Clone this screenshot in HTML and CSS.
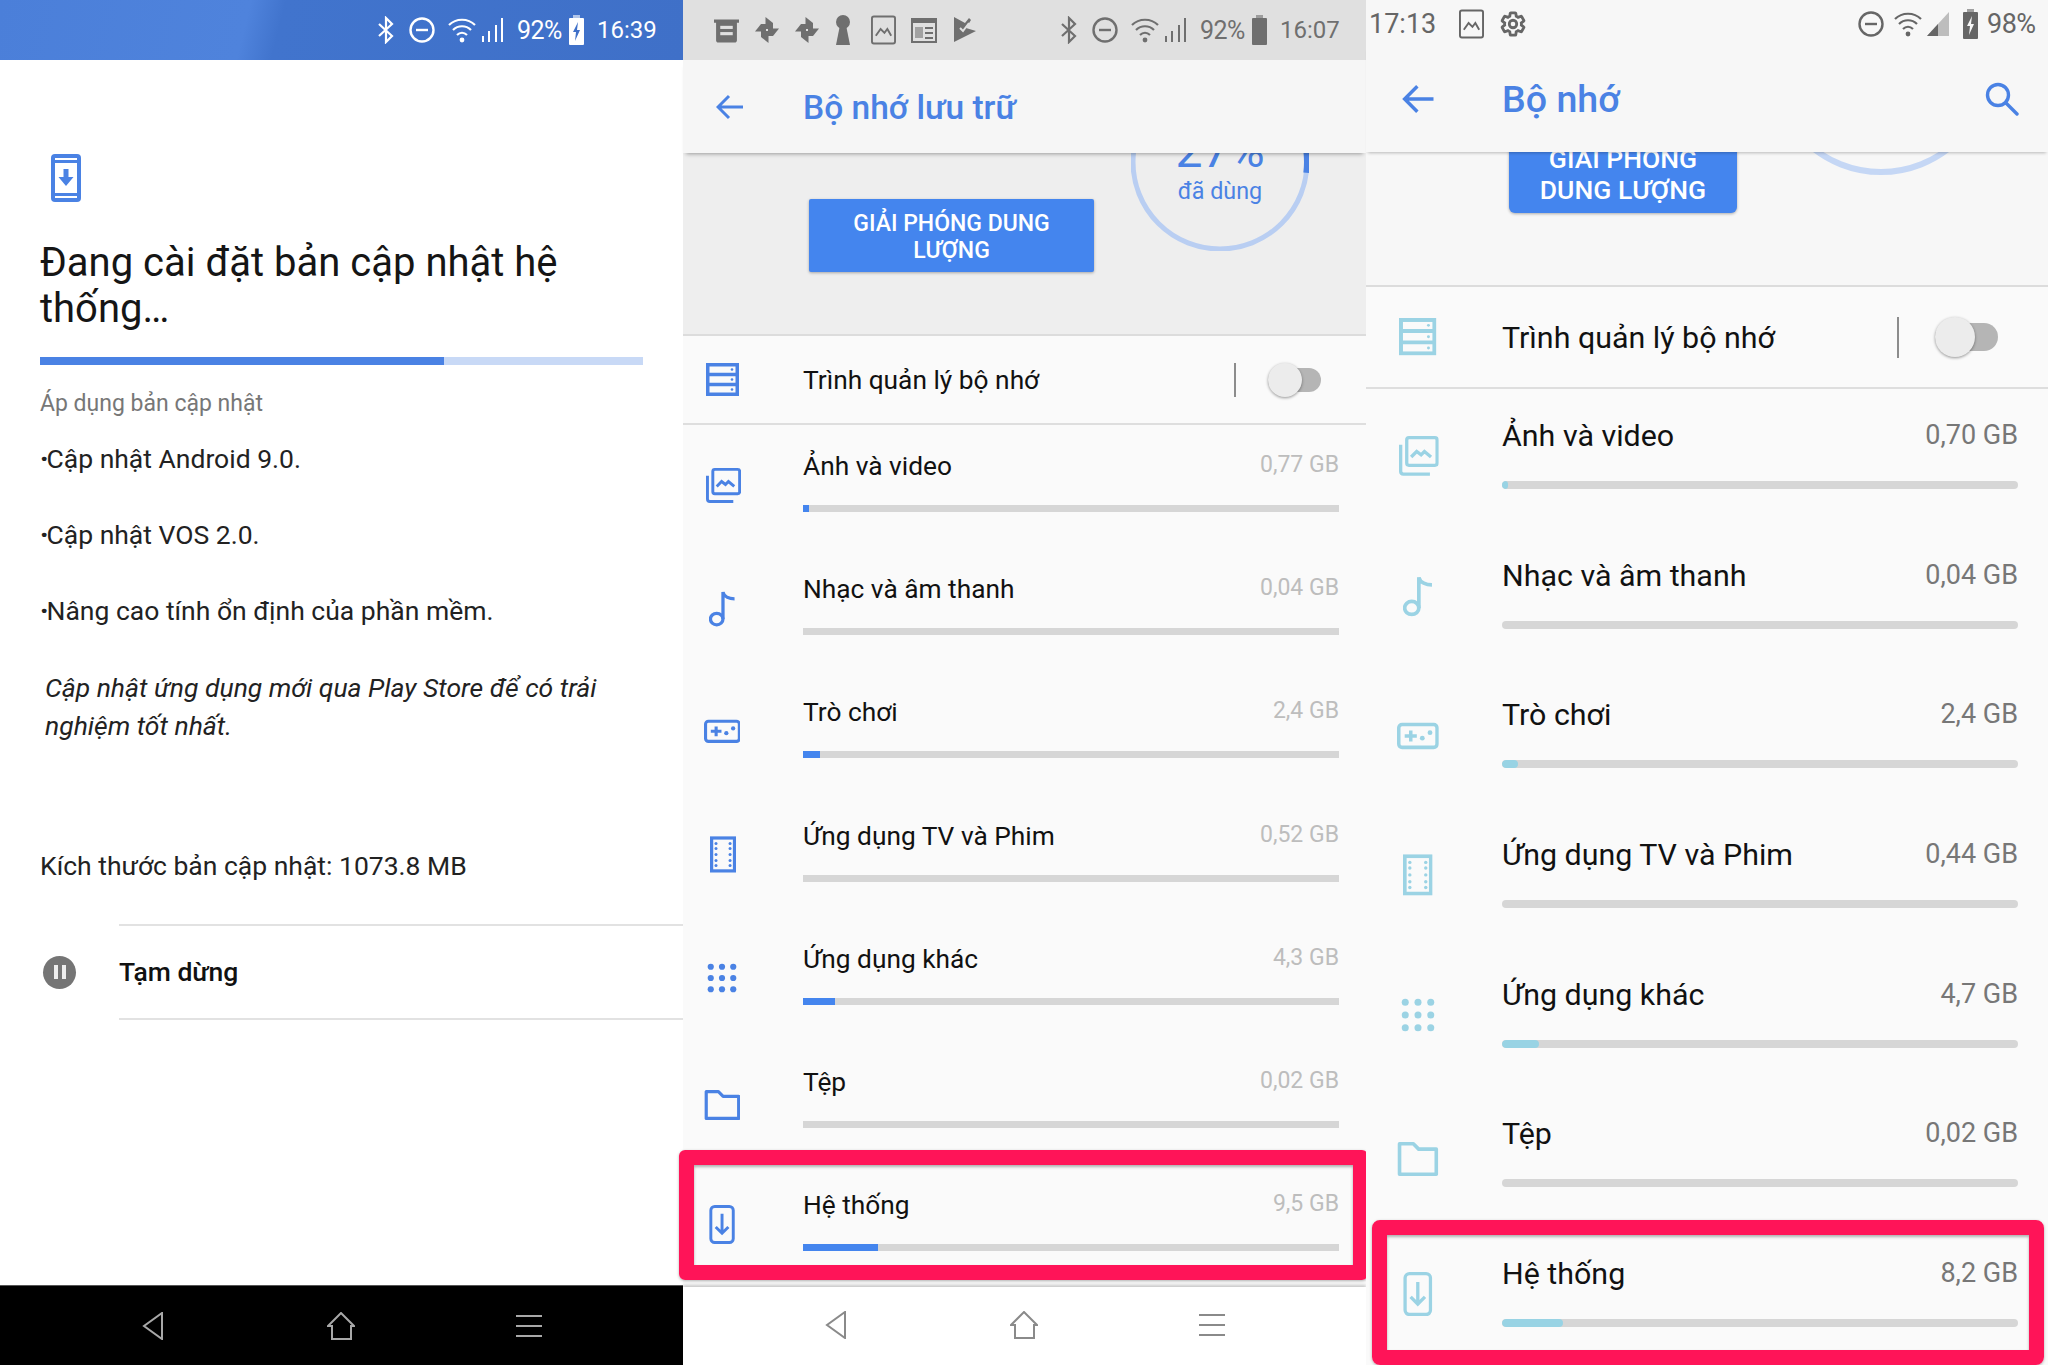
FILE: index.html
```html
<!DOCTYPE html>
<html lang="vi">
<head>
    <meta charset="UTF-8">
    <title>Bộ nhớ</title>
    <link rel="stylesheet" href="styles.css">
</head>
<body>
    <!-- icon set -->
    <svg class="defs" xmlns="http://www.w3.org/2000/svg">
        <symbol id="i-bt" viewBox="0 0 18 28"><path d="M2 8l13 12-6 6V2l6 6L2 20" fill="none" stroke="currentColor" stroke-width="2.2"/></symbol>
        <symbol id="i-dnd" viewBox="0 0 26 26"><circle cx="13" cy="13" r="11.5" fill="none" stroke="currentColor" stroke-width="2.4"/><rect x="7" y="11.8" width="12" height="2.4" fill="currentColor"/></symbol>
        <symbol id="i-wifi" viewBox="0 0 28 26"><g fill="none" stroke="currentColor" stroke-width="2.2"><path d="M1 8c7-7 19-7 26 0"/><path d="M5 13c5-5 13-5 18 0"/><path d="M9 18c3-3 7-3 10 0"/></g><circle cx="14" cy="23" r="2.4" fill="currentColor"/></symbol>
        <symbol id="i-bars" viewBox="0 0 22 26"><g fill="currentColor"><rect x="0" y="19" width="2" height="6"/><rect x="6" y="14" width="2" height="11"/><rect x="13" y="8" width="2" height="17"/><rect x="19" y="1" width="2" height="24"/></g></symbol>
        <symbol id="i-signal" viewBox="0 0 22 24"><path d="M22 0v24H0z" fill="#bdbdbd"/><path d="M11 12v12H0z" fill="currentColor"/></symbol>
        <symbol id="i-bat" viewBox="0 0 15 30"><rect x="4" y="0" width="7" height="3" fill="currentColor" opacity=".6"/><rect x="0" y="3" width="15" height="27" rx="1" fill="currentColor"/></symbol>
        <symbol id="i-batc" viewBox="0 0 15 30"><rect x="4" y="0" width="7" height="3" fill="currentColor" opacity=".6"/><rect x="0" y="3" width="15" height="27" rx="1" fill="currentColor"/><path d="M9 7l-5 10h3l-1 9 5-11H8z" fill="var(--bolt)"/></symbol>
        <symbol id="i-news" viewBox="0 0 24 24"><path d="M0 2h24v3h-2v17c0 1-1 2-2 2H4c-1 0-2-1-2-2V5H0z" fill="currentColor"/><rect x="6" y="8" width="12" height="3" fill="#e0e0e0"/><rect x="6" y="14" width="12" height="3" fill="#e0e0e0"/></symbol>
        <symbol id="i-pin" viewBox="0 0 24 28"><g fill="currentColor"><path d="M10.500 13V1l7.500 6v6z"/><path d="M13 12.500h11l-6 7.500h-5z"/><path d="M13.500 15v12l-7.500-6v-6z"/><path d="M11 15.500H0l6-7.500h5z"/></g></symbol>
        <symbol id="i-key" viewBox="0 0 16 30"><circle cx="8" cy="7" r="7" fill="currentColor"/><path d="M5 10h6l4 20H1z" fill="currentColor"/></symbol>
        <symbol id="i-image" viewBox="0 0 26 30"><rect x="1" y="1" width="24" height="28" rx="2" fill="none" stroke="currentColor" stroke-width="2"/><path d="M5 21l5-7 4 4 3-4 4 7" fill="none" stroke="currentColor" stroke-width="2"/></symbol>
        <symbol id="i-paper" viewBox="0 0 26 26"><rect x="1" y="2" width="24" height="23" fill="none" stroke="currentColor" stroke-width="2"/><rect x="1" y="1" width="24" height="5" fill="currentColor"/><rect x="4" y="10" width="8" height="11" fill="currentColor" opacity=".55"/><rect x="14" y="10" width="8" height="2" fill="currentColor"/><rect x="14" y="15" width="8" height="2" fill="currentColor"/><rect x="14" y="20" width="8" height="2" fill="currentColor"/></symbol>
        <symbol id="i-flag" viewBox="0 0 22 28"><path d="M0 1l11 6 4-5 2 2-5 8 10 3-22 11z" fill="currentColor"/><path d="M6 12l3 3 6-8" fill="none" stroke="#e0e0e0" stroke-width="2"/></symbol>
        <symbol id="i-gear" viewBox="0 0 24 24"><path d="M19.14 12.94c.04-.3.06-.61.06-.94 0-.32-.02-.64-.07-.94l2.03-1.58c.18-.14.23-.41.12-.61l-1.92-3.32c-.12-.22-.37-.29-.59-.22l-2.39.96c-.5-.38-1.03-.7-1.62-.94l-.36-2.54c-.04-.24-.24-.41-.48-.41h-3.84c-.24 0-.43.17-.47.41l-.36 2.54c-.59.24-1.13.57-1.62.94l-2.39-.96c-.22-.08-.47 0-.59.22L2.74 8.87c-.12.21-.08.47.12.61l2.03 1.58c-.05.3-.09.63-.09.94s.02.64.07.94l-2.03 1.58c-.18.14-.23.41-.12.61l1.92 3.32c.12.22.37.29.59.22l2.39-.96c.5.38 1.03.7 1.62.94l.36 2.54c.05.24.24.41.48.41h3.84c.24 0 .44-.17.47-.41l.36-2.54c.59-.24 1.13-.56 1.62-.94l2.39.96c.22.08.47 0 .59-.22l1.92-3.32c.12-.22.07-.47-.12-.61l-2.01-1.58z" fill="none" stroke="currentColor" stroke-width="2.4"/><circle cx="12" cy="12" r="3.2" fill="none" stroke="currentColor" stroke-width="2.400"/></symbol>

        <symbol id="i-update" viewBox="0 0 30 48"><rect width="30" height="48" rx="4" fill="currentColor"/><g fill="#fff"><rect x="4" y="4" width="22" height="2"/><rect x="4" y="9" width="22" height="30"/><rect x="4" y="42" width="22" height="2"/></g><path d="M12.500 15h5v8h5L15 32l-7.500-9h5z" fill="currentColor"/></symbol>
        <symbol id="i-storage" viewBox="0 0 33 33"><g fill="none" stroke="currentColor" stroke-width="3.500"><rect x="1.750" y="1.750" width="29.500" height="29.500"/><path d="M1.500 11.500h30M1.500 21.500h30"/></g><g fill="currentColor"><circle cx="26" cy="6.500" r="1.300"/><circle cx="26" cy="16.500" r="1.300"/><circle cx="26" cy="26.500" r="1.300"/></g></symbol>
        <symbol id="i-photo" viewBox="0 0 36 36"><g fill="none" stroke="currentColor" stroke-width="3"><rect x="7" y="1.500" width="27.500" height="25" rx="2"/><path d="M1.500 8v24c0 1.500 1 2.500 2.500 2.500h24"/><path d="M11 19l5-5 4 3 3-3 6 5"/></g></symbol>
        <symbol id="i-note" viewBox="0 0 28 38"><g fill="none" stroke="currentColor" stroke-width="3.400"><ellipse cx="8" cy="30" rx="6.500" ry="6"/><path d="M14.500 30V2c1 5 7 7 12 7"/></g></symbol>
        <symbol id="i-game" viewBox="0 0 38 24"><g fill="none" stroke="currentColor" stroke-width="3.200"><rect x="1.600" y="1.600" width="34.800" height="20.800" rx="3"/><path d="M7 12h11M12.500 7v10"/></g><g fill="currentColor"><circle cx="23" cy="14" r="2.200"/><circle cx="30" cy="9" r="2.200"/></g></symbol>
        <symbol id="i-film" viewBox="0 0 26 36"><rect x="1.600" y="1.600" width="22.800" height="32.800" fill="none" stroke="currentColor" stroke-width="3.200"/><g fill="currentColor"><circle cx="6" cy="7" r="1.500"/><circle cx="6" cy="12" r="1.500"/><circle cx="6" cy="18" r="1.500"/><circle cx="6" cy="24" r="1.500"/><circle cx="6" cy="29" r="1.500"/><circle cx="20" cy="7" r="1.500"/><circle cx="20" cy="12" r="1.500"/><circle cx="20" cy="18" r="1.500"/><circle cx="20" cy="24" r="1.500"/><circle cx="20" cy="29" r="1.500"/></g></symbol>
        <symbol id="i-apps" viewBox="0 0 32 32"><g fill="currentColor"><circle cx="4" cy="4" r="3.300"/><circle cx="16" cy="4" r="3.300"/><circle cx="28" cy="4" r="3.300"/><circle cx="4" cy="16" r="3.300"/><circle cx="16" cy="16" r="3.300"/><circle cx="28" cy="16" r="3.300"/><circle cx="4" cy="28" r="3.300"/><circle cx="16" cy="28" r="3.300"/><circle cx="28" cy="28" r="3.300"/></g></symbol>
        <symbol id="i-folder" viewBox="0 0 38 32"><path d="M1.700 1.700h13l5 5h16.600v23.600h-34.600z" fill="none" stroke="currentColor" stroke-width="3.400" stroke-linejoin="round"/></symbol>
        <symbol id="i-system" viewBox="0 0 26 40"><rect x="1.500" y="1.500" width="23" height="37" rx="4" fill="none" stroke="currentColor" stroke-width="3"/><path d="M13 9v20M6.500 22.500L13 29l6.500-6.500" fill="none" stroke="currentColor" stroke-width="3"/></symbol>
        <symbol id="i-back" viewBox="0 0 28 26"><path d="M27 13H3M13 2L2 13l11 11" fill="none" stroke="currentColor" stroke-width="3"/></symbol>
        <symbol id="i-search" viewBox="0 0 34 34"><circle cx="13" cy="13" r="10.500" fill="none" stroke="currentColor" stroke-width="3.400"/><path d="M21 21l11 11" stroke="currentColor" stroke-width="3.400" stroke-linecap="round"/></symbol>

        <symbol id="i-nav-back" viewBox="0 0 28 28"><path d="M23 1v26L5 14z" fill="none" stroke="currentColor" stroke-width="2"/></symbol>
        <symbol id="i-nav-home" viewBox="0 0 28 28"><path d="M1 14L14 1l13 13h-3v13H5V14z" fill="none" stroke="currentColor" stroke-width="2"/></symbol>
        <symbol id="i-nav-menu" viewBox="0 0 28 28"><path d="M1 4h26M1 14h26M1 24h26" fill="none" stroke="currentColor" stroke-width="2.200"/></symbol>
    </svg>

    <div class="screens">
        <!-- man hinh 1 -->
        <section class="panel update">
            <div class="statusbar statusbar-blue">
                <svg class="st st-bt"><use href="#i-bt"/></svg>
                <svg class="st st-dnd"><use href="#i-dnd"/></svg>
                <svg class="st st-wifi"><use href="#i-wifi"/></svg>
                <svg class="st st-bars"><use href="#i-bars"/></svg>
                <span class="st-text st-pct">92%</span>
                <svg class="st st-bat"><use href="#i-batc"/></svg>
                <span class="st-text st-time">16:39</span>
            </div>
            <div class="update-body">
                <svg class="update-icon"><use href="#i-update"/></svg>
                <h1 class="update-title">Đang cài đặt bản cập nhật hệ thống…</h1>
                <div class="update-progress"><div class="update-progress-fill"></div></div>
                <p class="update-sub">Áp dụng bản cập nhật</p>
                <p class="update-line"><b class="dot">·</b>Cập nhật Android 9.0.</p>
                <p class="update-line"><b class="dot">·</b>Cập nhật VOS 2.0.</p>
                <p class="update-line"><b class="dot">·</b>Nâng cao tính ổn định của phần mềm.</p>
                <p class="update-note">Cập nhật ứng dụng mới qua Play Store để có trải nghiệm tốt nhất.</p>
                <p class="update-size">Kích thước bản cập nhật: 1073.8 MB</p>
            </div>
            <div class="pause-row">
                <div class="pause-icon"><i></i><i></i></div>
                <div class="pause-label">Tạm dừng</div>
            </div>
            <div class="navbar navbar-dark">
                <svg><use href="#i-nav-back"/></svg>
                <svg><use href="#i-nav-home"/></svg>
                <svg><use href="#i-nav-menu"/></svg>
            </div>
        </section>

        <!-- man hinh 2 -->
        <section class="panel storage storage-a">
            <div class="statusbar statusbar-grey">
                <div class="notif">
                    <svg class="nt nt-news"><use href="#i-news"/></svg>
                    <svg class="nt nt-pin"><use href="#i-pin"/></svg>
                    <svg class="nt nt-pin"><use href="#i-pin"/></svg>
                    <svg class="nt nt-key"><use href="#i-key"/></svg>
                    <svg class="nt nt-image"><use href="#i-image"/></svg>
                    <svg class="nt nt-paper"><use href="#i-paper"/></svg>
                    <svg class="nt nt-flag"><use href="#i-flag"/></svg>
                </div>
                <svg class="st st-bt"><use href="#i-bt"/></svg>
                <svg class="st st-dnd"><use href="#i-dnd"/></svg>
                <svg class="st st-wifi"><use href="#i-wifi"/></svg>
                <svg class="st st-bars"><use href="#i-bars"/></svg>
                <span class="st-text st-pct">92%</span>
                <svg class="st st-bat"><use href="#i-bat"/></svg>
                <span class="st-text st-time">16:07</span>
            </div>
            <header class="appbar">
                <svg class="appbar-back"><use href="#i-back"/></svg>
                <div class="appbar-title">Bộ nhớ lưu trữ</div>
            </header>
            <div class="summary">
                <button class="free-btn">GIẢI PHÓNG DUNG LƯỢNG</button>
                <div class="gauge">
                    <svg viewBox="0 0 178 178"><circle class="gauge-track" cx="89" cy="89" r="87"/><circle class="gauge-arc" cx="89" cy="89" r="87" pathLength="100"/></svg>
                    <div class="gauge-text"><div class="gauge-num">27%</div><div class="gauge-cap">đã dùng</div></div>
                </div>
            </div>
            <div class="manager">
                <div class="icon-cell"><svg class="ic ic-storage"><use href="#i-storage"/></svg></div>
                <div class="manager-name">Trình quản lý bộ nhớ</div>
                <div class="manager-sep"></div>
                <div class="toggle"></div>
            </div>
            <div class="row">
                <div class="icon-cell"><svg class="ic ic-photo"><use href="#i-photo"/></svg></div>
                <div class="row-body"><div class="row-head"><span class="row-name">Ảnh và video</span><span class="row-val">0,77 GB</span></div><div class="bar"><div class="bar-fill" style="width:6px"></div></div></div>
            </div>
            <div class="row">
                <div class="icon-cell"><svg class="ic ic-note"><use href="#i-note"/></svg></div>
                <div class="row-body"><div class="row-head"><span class="row-name">Nhạc và âm thanh</span><span class="row-val">0,04 GB</span></div><div class="bar"></div></div>
            </div>
            <div class="row">
                <div class="icon-cell"><svg class="ic ic-game"><use href="#i-game"/></svg></div>
                <div class="row-body"><div class="row-head"><span class="row-name">Trò chơi</span><span class="row-val">2,4 GB</span></div><div class="bar"><div class="bar-fill" style="width:17px"></div></div></div>
            </div>
            <div class="row">
                <div class="icon-cell"><svg class="ic ic-film"><use href="#i-film"/></svg></div>
                <div class="row-body"><div class="row-head"><span class="row-name">Ứng dụng TV và Phim</span><span class="row-val">0,52 GB</span></div><div class="bar"></div></div>
            </div>
            <div class="row">
                <div class="icon-cell"><svg class="ic ic-apps"><use href="#i-apps"/></svg></div>
                <div class="row-body"><div class="row-head"><span class="row-name">Ứng dụng khác</span><span class="row-val">4,3 GB</span></div><div class="bar"><div class="bar-fill" style="width:32px"></div></div></div>
            </div>
            <div class="row">
                <div class="icon-cell"><svg class="ic ic-folder"><use href="#i-folder"/></svg></div>
                <div class="row-body"><div class="row-head"><span class="row-name">Tệp</span><span class="row-val">0,02 GB</span></div><div class="bar"></div></div>
            </div>
            <div class="row">
                <div class="icon-cell"><svg class="ic ic-system"><use href="#i-system"/></svg></div>
                <div class="row-body"><div class="row-head"><span class="row-name">Hệ thống</span><span class="row-val">9,5 GB</span></div><div class="bar"><div class="bar-fill" style="width:75px"></div></div></div>
            </div>
            <div class="navbar navbar-light">
                <svg><use href="#i-nav-back"/></svg>
                <svg><use href="#i-nav-home"/></svg>
                <svg><use href="#i-nav-menu"/></svg>
            </div>
            <div class="highlight"></div>
        </section>

        <!-- man hinh 3 -->
        <section class="panel storage storage-b">
            <div class="statusbar statusbar-flat">
                <span class="st-text st-clock">17:13</span>
                <svg class="nt nt-image nt-first"><use href="#i-image"/></svg>
                <svg class="nt nt-gear"><use href="#i-gear"/></svg>
                <svg class="st st-dnd st-push"><use href="#i-dnd"/></svg>
                <svg class="st st-wifi"><use href="#i-wifi"/></svg>
                <svg class="st st-signal"><use href="#i-signal"/></svg>
                <svg class="st st-bat"><use href="#i-batc"/></svg>
                <span class="st-text st-pct">98%</span>
            </div>
            <header class="appbar">
                <svg class="appbar-back"><use href="#i-back"/></svg>
                <div class="appbar-title">Bộ nhớ</div>
                <svg class="appbar-search"><use href="#i-search"/></svg>
            </header>
            <div class="summary">
                <button class="free-btn">GIẢI PHÓNG DUNG LƯỢNG</button>
                <div class="gauge">
                    <svg viewBox="0 0 224 224"><circle class="gauge-track" cx="112" cy="112" r="109"/></svg>
                </div>
            </div>
            <div class="manager">
                <div class="icon-cell"><svg class="ic ic-storage"><use href="#i-storage"/></svg></div>
                <div class="manager-name">Trình quản lý bộ nhớ</div>
                <div class="manager-sep"></div>
                <div class="toggle"></div>
            </div>
            <div class="row">
                <div class="icon-cell"><svg class="ic ic-photo"><use href="#i-photo"/></svg></div>
                <div class="row-body"><div class="row-head"><span class="row-name">Ảnh và video</span><span class="row-val">0,70 GB</span></div><div class="bar"><div class="bar-fill" style="width:6px"></div></div></div>
            </div>
            <div class="row">
                <div class="icon-cell"><svg class="ic ic-note"><use href="#i-note"/></svg></div>
                <div class="row-body"><div class="row-head"><span class="row-name">Nhạc và âm thanh</span><span class="row-val">0,04 GB</span></div><div class="bar"></div></div>
            </div>
            <div class="row">
                <div class="icon-cell"><svg class="ic ic-game"><use href="#i-game"/></svg></div>
                <div class="row-body"><div class="row-head"><span class="row-name">Trò chơi</span><span class="row-val">2,4 GB</span></div><div class="bar"><div class="bar-fill" style="width:16px"></div></div></div>
            </div>
            <div class="row">
                <div class="icon-cell"><svg class="ic ic-film"><use href="#i-film"/></svg></div>
                <div class="row-body"><div class="row-head"><span class="row-name">Ứng dụng TV và Phim</span><span class="row-val">0,44 GB</span></div><div class="bar"></div></div>
            </div>
            <div class="row">
                <div class="icon-cell"><svg class="ic ic-apps"><use href="#i-apps"/></svg></div>
                <div class="row-body"><div class="row-head"><span class="row-name">Ứng dụng khác</span><span class="row-val">4,7 GB</span></div><div class="bar"><div class="bar-fill" style="width:37px"></div></div></div>
            </div>
            <div class="row">
                <div class="icon-cell"><svg class="ic ic-folder"><use href="#i-folder"/></svg></div>
                <div class="row-body"><div class="row-head"><span class="row-name">Tệp</span><span class="row-val">0,02 GB</span></div><div class="bar"></div></div>
            </div>
            <div class="row">
                <div class="icon-cell"><svg class="ic ic-system"><use href="#i-system"/></svg></div>
                <div class="row-body"><div class="row-head"><span class="row-name">Hệ thống</span><span class="row-val">8,2 GB</span></div><div class="bar"><div class="bar-fill" style="width:61px"></div></div></div>
            </div>
            <div class="highlight"></div>
        </section>
    </div>
</body>
</html>
```

FILE: styles.css
```css
/* trang chung */
html, body {
    margin: 0;
    height: 100%;
    overflow: hidden;
}
body {
    font-family: Roboto, "Liberation Sans", sans-serif;
    color: #111;
    background: #fff;
}
.defs {
    width: 0;
    height: 0;
    position: absolute;
}
.screens {
    display: grid;
    grid-template-columns: 683px 683px 682px;
    height: 1365px;
}
.panel {
    position: relative;
    display: flex;
    flex-direction: column;
    height: 1365px;
}

/* thanh trang thai */
.statusbar {
    display: flex;
    align-items: center;
    flex: none;
    height: 60px;
    padding-right: 28px;
    box-sizing: border-box;
    justify-content: flex-end;
}
.statusbar-blue {
    background: linear-gradient(104deg, #4b7fd9 0%, #4f83dc 36%, #4174cd 41%, #3f70c8 100%);
    color: #fff;
    --bolt: #3f70c8;
}
.statusbar-grey {
    background: #e0e0e0;
    color: #6f6f6f;
}
.statusbar-flat {
    height: 46px;
    background: #f7f7f7;
    color: #666;
    padding: 2px 11px 0 3px;
    --bolt: #f7f7f7;
}
.st, .nt {
    flex: none;
}
.st-bt { width: 18px; height: 28px; margin-right: 14px; }
.st-dnd { width: 26px; height: 26px; margin-right: 13px; }
.st-wifi { width: 28px; height: 26px; margin-right: 6px; }
.st-bars { width: 22px; height: 26px; margin-right: 13px; }
.st-bat { width: 15px; height: 30px; margin: 0 13px 0 8px; }
.st-text { font-size: 25px; }
.st-pct { width: 44px; letter-spacing: -.5px; }
.st-time { width: 58px; font-size: 24px; }
.notif {
    display: flex;
    align-items: center;
    margin-right: auto;
    padding-left: 31px;
}
.nt-news { width: 25px; height: 26px; margin-right: 16px; }
.nt-pin { width: 24px; height: 28px; margin-right: 16px; }
.nt-key { width: 16px; height: 30px; margin-right: 20px; }
.nt-image { width: 25px; height: 30px; margin-right: 15px; }
.nt-paper { width: 26px; height: 26px; margin-right: 17px; }
.nt-flag { width: 22px; height: 28px; }
.st-clock { font-size: 27px; width: 90px; }
.nt-first { margin-right: 15px; }
.nt-gear { width: 28px; height: 28px; }
.st-push { margin-left: auto; margin-right: 10px; }
.storage-b .st-wifi { margin-right: 5px; }
.st-signal { width: 22px; height: 24px; }
.storage-b .st-bat { margin: 0 9px 0 14px; }
.storage-b .st-pct { font-size: 27px; width: 50px; }

/* man hinh cap nhat */
.update-body {
    flex: 1;
    padding: 94px 40px 0;
    background: #fff;
}
.update-icon {
    display: block;
    width: 30px;
    height: 48px;
    margin-left: 11px;
    color: #4a82e4;
}
.update-title {
    margin: 38px 0 0;
    font-size: 40px;
    line-height: 46px;
    font-weight: 400;
    color: #151515;
}
.update-progress {
    height: 8px;
    margin-top: 25px;
    background: #c8d9f6;
}
.update-progress-fill {
    width: 404px;
    height: 100%;
    background: #4a82e4;
}
.update-sub {
    margin: 24px 0 0;
    font-size: 23px;
    line-height: 30px;
    color: #777;
}
.update-line {
    margin: 0;
    padding-top: 39px;
    font-size: 26.5px;
    line-height: 37px;
    color: #222;
}
.update-sub + .update-line {
    padding-top: 21px;
}
.dot {
    margin-right: -2px;
    font-weight: 900;
}
.update-note {
    margin: 0;
    padding: 40px 30px 0 5px;
    font-size: 26.5px;
    line-height: 38px;
    font-style: italic;
    color: #222;
}
.update-size {
    margin: 0;
    padding-top: 102px;
    font-size: 26.5px;
    line-height: 37px;
    color: #222;
}
.pause-row {
    position: absolute;
    top: 924px;
    left: 0;
    right: 0;
    display: flex;
    align-items: center;
}
.pause-icon {
    display: flex;
    align-items: center;
    justify-content: center;
    gap: 4px;
    flex: none;
    width: 33px;
    height: 33px;
    margin: 0 43px 0 43px;
    border-radius: 50%;
    background: #757575;
}
.pause-icon i {
    width: 4px;
    height: 14px;
    background: #eee;
}
.pause-label {
    flex: 1;
    height: 96px;
    line-height: 92px;
    font-size: 26.5px;
    font-weight: 500;
    border-top: 2px solid #e2e2e2;
    border-bottom: 2px solid #e2e2e2;
    box-sizing: border-box;
}

/* thanh dieu huong */
.navbar {
    display: flex;
    align-items: center;
    justify-content: center;
    gap: 160px;
    flex: none;
    height: 78px;
    padding: 0 2px 2px 0;
    box-sizing: border-box;
}
.navbar svg {
    width: 28px;
    height: 28px;
}
.navbar-dark {
    position: absolute;
    left: 0;
    right: 0;
    bottom: 0;
    height: 80px;
    padding-bottom: 0;
    background: #000;
    color: #a8a8a8;
    border-top: 1px solid #555;
}
.navbar-light {
    background: #fff;
    color: #8a8a8a;
    box-shadow: 0 -2px 3px rgba(0, 0, 0, .2);
}

/* man hinh bo nho */
.storage {
    background: #fafafa;
    font-size: 26.3px;
}
.appbar {
    position: relative;
    z-index: 1;
    display: flex;
    align-items: center;
    flex: none;
    height: 93px;
    padding-top: 1px;
    box-sizing: border-box;
    background: #f6f6f6;
    box-shadow: 0 4px 4px -3px rgba(0, 0, 0, .35);
    color: #4a82e4;
}
.appbar-back {
    width: 28px;
    height: 26px;
    margin: 0 59px 0 33px;
}
.appbar-title {
    font-size: 33.5px;
    font-weight: 500;
}
.summary {
    position: relative;
    flex: none;
    height: 183px;
    overflow: hidden;
    background: #eeeeee;
    border-bottom: 2px solid #dcdcdc;
    box-sizing: border-box;
}
.free-btn {
    display: block;
    width: 285px;
    height: 73px;
    margin: 46px 0 0 126px;
    padding: 2px 20px 0;
    border: 0;
    border-radius: 2px;
    background: #4485ee;
    box-shadow: 0 1px 3px rgba(0, 0, 0, .3);
    color: #fff;
    font-family: inherit;
    font-size: 23px;
    line-height: 27px;
    font-weight: 500;
}
.gauge {
    position: absolute;
    top: -80px;
    left: 448px;
    width: 178px;
    height: 178px;
}
.gauge svg {
    display: block;
    width: 100%;
    height: 100%;
    fill: none;
}
.gauge-track {
    stroke: #b9cef2;
    stroke-width: 5;
}
.gauge-arc {
    stroke: #4a82e4;
    stroke-width: 6;
    stroke-dasharray: 27 100;
    transform: rotate(-90deg);
    transform-origin: center;
}
.gauge-text {
    position: absolute;
    top: 53px;
    left: 0;
    right: 0;
    text-align: center;
    color: #4a82e4;
}
.gauge-num {
    font-size: 48px;
    line-height: 50px;
}
.gauge-cap {
    font-size: 23.3px;
    line-height: 30px;
}
.manager {
    display: flex;
    align-items: center;
    flex: none;
    height: 89px;
    padding-right: 45px;
    border-bottom: 2px solid #dedede;
    box-sizing: border-box;
    background: #fafafa;
}
.icon-cell {
    display: flex;
    align-items: center;
    justify-content: center;
    flex: none;
    width: 78px;
    margin-right: 42px;
    font-size: 30px;
    color: #4a82e4;
}
.manager-name {
    flex: 1;
}
.manager-sep {
    width: 2px;
    height: 34px;
    margin-right: 32px;
    background: #8c8c8c;
}
.toggle {
    position: relative;
    width: 53px;
    height: 24px;
    border-radius: 12px;
    background: #b5b5b5;
}
/* nut tron cua cong tac */
.toggle::before {
    content: "";
    position: absolute;
    top: -5px;
    left: 0;
    width: 34px;
    height: 34px;
    border-radius: 50%;
    background: #ececec;
    box-shadow: 0 1px 3px rgba(0, 0, 0, .4);
}
.row {
    display: flex;
    flex: none;
    height: 123.2px;
    padding-right: 27px;
    box-sizing: border-box;
}
.row .icon-cell {
    height: 120px;
}
.row-body {
    flex: 1;
    padding-top: 23px;
}
.row-head {
    display: flex;
    justify-content: space-between;
    height: 36px;
    line-height: 36px;
}
.row-val {
    margin-top: -1px;
    font-size: 23px;
    color: #bdbdbd;
}
.bar {
    height: 7px;
    margin-top: 21px;
    background: #d6d6d6;
    overflow: hidden;
}
.bar-fill {
    height: 100%;
    background: #4485ee;
}
.ic-storage { width: 1.1em; height: 1.1em; }
.ic-photo { width: 1.17em; height: 1.23em; margin-left: .12em; }
.ic-note { width: .9em; height: 1.23em; margin-top: .02em; }
.ic-game { width: 1.23em; height: .82em; margin-top: .02em; }
.ic-film { width: .87em; height: 1.23em; margin: 0 0 0 .1em; }
.ic-apps { width: 1em; height: 1em; margin-top: .04em; }
.ic-folder { width: 1.23em; height: 1em; margin-top: .28em; }
.ic-system { width: .87em; height: 1.3em; }
.highlight {
    position: absolute;
    top: 1150px;
    left: -4px;
    width: 689px;
    height: 130px;
    border: 15px solid #ff1458;
    border-radius: 6px;
    box-sizing: border-box;
    box-shadow: inset 0 2px 3px rgba(0, 0, 0, .3), 0 1px 3px rgba(0, 0, 0, .3);
}

/* man hinh 3 lon hon mot chut */
.storage-b .appbar {
    height: 106px;
    padding-top: 0;
    background: #f7f7f7;
    box-shadow: 0 3px 3px -2px rgba(0, 0, 0, .25);
}
.storage-b .appbar-back {
    width: 35px;
    height: 30px;
    margin: 0 66px 0 35px;
}
.storage-b .appbar-title {
    flex: 1;
    font-size: 37.6px;
}
.appbar-search {
    width: 34px;
    height: 34px;
    margin-right: 29px;
}
.storage-b .summary {
    height: 135px;
    background: #f7f7f7;
}
.storage-b .free-btn {
    width: 228px;
    height: 86px;
    margin: -25px 0 0 143px;
    padding: 8px 20px 0;
    border-radius: 6px;
    font-size: 26.5px;
    line-height: 31px;
}
.storage-b .gauge {
    top: -201px;
    left: 403px;
    width: 224px;
    height: 224px;
}
.storage-b .gauge-track {
    stroke-width: 6;
    stroke: #c5d7f5;
}
.storage-b {
    font-size: 30.4px;
}
.storage-b .manager {
    height: 102px;
    padding-right: 50px;
}
.storage-b .icon-cell {
    width: 104px;
    margin-right: 32px;
    font-size: 34px;
    color: #9bd3e4;
}
.storage-b .manager-sep {
    height: 41px;
    margin-right: 36px;
}
.storage-b .toggle {
    width: 63px;
    height: 28px;
    border-radius: 14px;
}
.storage-b .toggle::before {
    top: -6px;
    width: 40px;
    height: 40px;
}
.storage-b .row {
    height: 139.7px;
    padding-right: 30px;
}
.storage-b .row .icon-cell {
    height: 134px;
}
.storage-b .ic-film {
    margin-left: 0;
}
.storage-b .ic-photo {
    margin-left: .04em;
}
.storage-b .row-body {
    padding-top: 27px;
}
.storage-b .row-head {
    height: 40px;
    line-height: 40px;
}
.storage-b .row-val {
    font-size: 27px;
    color: #777;
}
.storage-b .bar {
    height: 8px;
    margin-top: 25px;
    border-radius: 4px;
}
.storage-b .bar-fill {
    background: #98d3e4;
    border-radius: 4px;
}
.storage-b .highlight {
    top: 1220px;
    left: 6px;
    width: 672px;
    height: 145px;
    border-radius: 8px;
}
```
